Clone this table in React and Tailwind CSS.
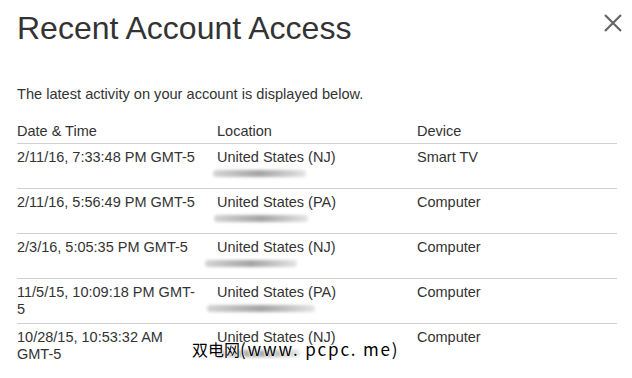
const ROWS = [
  { date: "2/11/16, 7:33:48 PM GMT-\u200B5", loc: "United States (NJ)", device: "Smart TV", bar: "ml-[-4px] w-[93px]" },
  { date: "2/11/16, 5:56:49 PM GMT-\u200B5", loc: "United States (PA)", device: "Computer", bar: "ml-[-3px] w-[94px]" },
  { date: "2/3/16, 5:05:35 PM GMT-\u200B5", loc: "United States (NJ)", device: "Computer", bar: "ml-[-12px] w-[92px]" },
  { date: "11/5/15, 10:09:18 PM GMT-\u200B5", loc: "United States (PA)", device: "Computer", bar: "ml-[-10px] w-[108px]" },
  { date: "10/28/15, 10:53:32 AM GMT-\u200B5", loc: "United States (NJ)", device: "Computer", bar: "ml-[-2px] w-[85px]" },
];

function CloseIcon() {
  return (
    <svg width="20" height="20" viewBox="0 0 20 20" className="mt-[3px]">
      <path d="M2 2 L18 18 M18 2 L2 18" stroke="#666" strokeWidth="2.2" fill="none" />
    </svg>
  );
}

export default function App() {
  return (
    <div className="relative w-[632px] h-[378px] overflow-hidden bg-white text-[#333] font-['Liberation_Sans',Arial,sans-serif]">
      {/* Header */}
      <div className="flex items-start justify-between pl-[17px] pr-[9px] pt-[10px]">
        <h1 className="text-[32px] leading-[36px] font-normal">Recent Account Access</h1>
        <CloseIcon />
      </div>

      <p className="mt-[40px] px-[17px] text-[14.6px] leading-[17px]">
        The latest activity on your account is displayed below.
      </p>

      {/* Table */}
      <div className="mt-[20px] ml-[17px] w-[600px] text-[14.5px] leading-[17px]">
        <div className="grid grid-cols-[200px_200px_200px] border-b border-[#d0d0d0] pb-[3px]">
          <div>Date &amp; Time</div>
          <div>Location</div>
          <div>Device</div>
        </div>

        {ROWS.map((r, i) => (
          <div
            key={i}
            className={`grid grid-cols-[200px_200px_200px] py-[5px] h-[45px] ${i < ROWS.length - 1 ? "border-b border-[#d0d0d0]" : ""}`}
          >
            <div className="w-[182px]">{r.date}</div>
            <div>
              <div>{r.loc}</div>
              <div className={`mt-[4px] h-[7px] rounded-full bg-linear-to-r from-[#d4d4d4] via-[#a4a4a4] to-[#e4e4e4] blur-[1.4px] ${r.bar}`} />
            </div>
            <div>{r.device}</div>
          </div>
        ))}
      </div>

      {/* Watermark */}
      <div className="absolute left-[192px] top-[338px] text-[16px] leading-[22px] text-black font-['Noto_Sans_CJK_SC',sans-serif] [text-shadow:0_0_2px_#fff,0_0_2px_#fff,0_0_1px_#fff]">
        双电网<span className="text-[17px] tracking-[1.8px]">(www. pcpc. me)</span>
      </div>
    </div>
  );
}
